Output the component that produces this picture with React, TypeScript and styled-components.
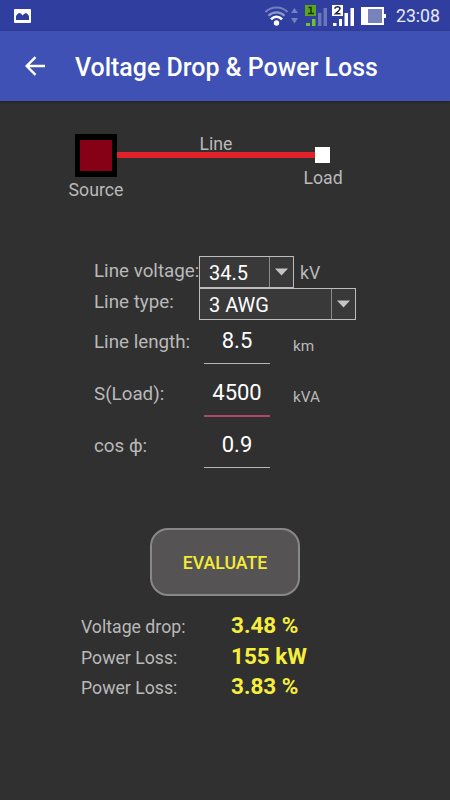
import React from "react";
import styled, { createGlobalStyle } from "styled-components";

const Global = createGlobalStyle`
  * { box-sizing: border-box; }
  body { margin: 0; background: #303030; }
`;

const Screen = styled.div`
  width: 450px;
  height: 800px;
  overflow: hidden;
  background: #303030;
  font-family: Roboto, "Liberation Sans", sans-serif;
  color: #b9b9b9;
`;

const StatusBar = styled.header`
  height: 31px;
  background: #303f9f;
  display: flex;
  align-items: flex-start;
  justify-content: space-between;
`;

const AppBar = styled.div`
  height: 70px;
  background: #3f51b5;
  display: flex;
  align-items: center;
  padding-left: 25px;
  box-shadow: 0 1px 2px #222;
`;

const Title = styled.h1`
  margin: 3px 0 0 30px;
  font-size: 24.95px;
  line-height: 32px;
  font-weight: 500;
  color: #fff;
  white-space: nowrap;
`;

const Text = styled.span<{ $size?: number; $top?: number; $left?: number; $color?: string }>`
  display: block;
  flex: none;
  white-space: nowrap;
  line-height: 24px;
  font-size: ${(p) => p.$size ?? 17.7}px;
  margin-top: ${(p) => p.$top ?? 0}px;
  margin-left: ${(p) => p.$left ?? 0}px;
  color: ${(p) => p.$color ?? "inherit"};
`;

const Diagram = styled.section`
  display: flex;
  height: 122px;
  padding: 33px 0 0 75px;
  margin-bottom: 33px;
`;

const Node = styled.div<{ $width: number; $top?: number }>`
  width: ${(p) => p.$width}px;
  padding-top: ${(p) => p.$top ?? 0}px;
  display: flex;
  flex-direction: column;
  align-items: center;
`;

const SourceBox = styled.div`
  flex: none;
  width: 42px;
  height: 43px;
  background: #860016;
  border: solid #000;
  border-width: 6px 5px;
`;

const LoadBox = styled.div`
  flex: none;
  width: 15px;
  height: 16px;
  background: #fff;
`;

const Wire = styled.div`
  width: 198px;
  display: flex;
  flex-direction: column;
  align-items: center;
`;

const WireLine = styled.div`
  width: 100%;
  height: 6px;
  margin-top: -4px;
  background: #e02228;
`;

const Form = styled.section`
  padding-left: 94px;
  height: 272px;
`;

const Row = styled.div<{ $height: number }>`
  display: grid;
  grid-template-columns: 105px 157px;
  height: ${(p) => p.$height}px;
`;

const Cell = styled.div`
  display: flex;
  align-items: flex-start;
`;

const Select = styled.div<{ $width: number }>`
  flex: none;
  width: ${(p) => p.$width}px;
  height: 32px;
  display: flex;
  background: #393939;
  border: 1.5px solid #bcbcbc;
`;

const SelectValue = styled.div`
  flex: 1;
  padding: 4px 0 0 9px;
`;

const SelectArrow = styled.div`
  width: 24px;
  border-left: 1px solid #8b8b8b;
  padding: 11px 0 0 5px;
  line-height: 0;
`;

const Field = styled.div<{ $color: string; $line: number; $height: number }>`
  flex: none;
  width: 66px;
  height: ${(p) => p.$height}px;
  margin-left: 5px;
  display: flex;
  justify-content: center;
  border-bottom: ${(p) => p.$line}px solid ${(p) => p.$color};
`;

const Evaluate = styled.button`
  display: block;
  width: 150px;
  height: 68px;
  margin: 0 0 19px 150px;
  padding: 1px 0 0;
  border: 2.5px solid #888;
  border-radius: 18px;
  background: #555354;
  color: #f3ec35;
  font: 500 17.7px/24px Roboto, "Liberation Sans", sans-serif;
`;

const ResultRow = styled.div`
  display: grid;
  grid-template-columns: 150px 1fr;
  height: 30.5px;
  padding-left: 81px;
`;

const ResultValue = styled.strong`
  font-size: 22.5px;
  line-height: 24px;
  font-weight: 700;
  color: #f6ee3e;
  margin-top: -2px;
  white-space: nowrap;
`;

const Arrow = () => (
  <svg width="13" height="8" viewBox="0 0 13 8">
    <path d="M0 .5h13L6.5 7.5z" fill="#c4c4c4" />
  </svg>
);

const PictureIcon = () => (
  <svg width="60" height="31" viewBox="0 0 60 31">
    <rect x="14" y="9" width="17" height="14" rx="1" fill="#fff" />
    <path d="M16 20v-4l1.500-2 1.500-1 2 .5 1.500 2 1.500-1.500 2-1 2 1.500 1 2v3.500z" fill="#303f9f" />
  </svg>
);

const StatusIcons = () => (
  <svg width="135" height="31" viewBox="255 0 135 31">
    <g fill="none" strokeWidth="2.2">
      <path d="M265.500 12c6-6 16-6 22 0" stroke="#7480bd" />
      <path d="M268.500 15.700c4.500-4.500 11.500-4.500 16 0" stroke="#8f98cb" />
      <path d="M271 19.400c3.200-3.600 7.800-3.600 11 0" stroke="#fff" strokeWidth="2.600" />
    </g>
    <circle cx="276.500" cy="23" r="2.700" fill="#fff" />
    <path d="M291 13h7l-3.500-5zM291 18h7l-3.500 5.500z" fill="#7480bd" />
    <rect x="305" y="5" width="11" height="11" fill="#5aa51b" />
    <path d="M308.500 7.500h2.500v6M308 13.500h6" fill="none" stroke="#18310c" strokeWidth="1.500" />
    <path d="M306 23h4v3h-4zM312 19h3.500v7H312z" fill="#70c12b" />
    <path d="M318 13h3.500v13H318zM323.500 8h3.500v18h-3.500z" fill="#6976b7" />
    <rect x="332" y="5" width="11" height="11" fill="#fff" />
    <path d="M335 8.800q0-2 2.500-2t2.500 1.800q0 1.500-4.500 5.200h5" fill="none" stroke="#202744" strokeWidth="1.500" />
    <path d="M333 23h3.500v3H333zM339 19h3v7h-3zM344.500 13h3.500v13h-3.500zM350.500 8h3.500v18h-3.500z" fill="#fff" />
    <path d="M361 7h23v7h2v4h-2v7h-23z" fill="#fff" />
    <rect x="368" y="9" width="14" height="14" fill="#7882bd" />
  </svg>
);

const StatusRight = styled.div`
  display: flex;
  padding-right: 10px;
`;

const BackIcon = () => (
  <svg width="20" height="20" viewBox="0 0 20 20" fill="none" stroke="#fff" strokeWidth="2.400">
    <path d="M20 10H2M10.500 1.200L1.700 10l8.800 8.800" />
  </svg>
);

const results = [
  ["Voltage drop:", "3.48 %"],
  ["Power Loss:", "155 kW"],
  ["Power Loss:", "3.83 %"],
];

const fields = [
  { label: "Line length:", value: "8.5", unit: "km", line: "#b5b5b5", stroke: 1.5, height: 44, shift: 0 },
  { label: "S(Load):", value: "4500", unit: "kVA", line: "#b04865", stroke: 2, height: 45, shift: 0 },
  { label: "cos ф:", value: "0.9", unit: "", line: "#b5b5b5", stroke: 1.5, height: 44.5, shift: 0.7 },
];

export default function App() {
  return (
    <Screen>
      <Global />
      <StatusBar>
        <PictureIcon />
        <StatusRight>
          <StatusIcons />
          <Text $top={4} $left={6} $color="#e8eaf6">23:08</Text>
        </StatusRight>
      </StatusBar>
      <AppBar>
        <BackIcon />
        <Title>Voltage Drop &amp; Power Loss</Title>
      </AppBar>
      <Diagram>
        <Node $width={42}>
          <SourceBox />
          <Text $top={1}>Source</Text>
        </Node>
        <Wire>
          <Text $top={-2}>Line</Text>
          <WireLine />
        </Wire>
        <Node $width={15} $top={13}>
          <LoadBox />
          <Text $top={3} $left={1}>Load</Text>
        </Node>
      </Diagram>
      <Form>
        <Row $height={32}>
          <Text $size={18.8} $top={2.5}>Line voltage:</Text>
          <Cell>
            <Select $width={95}>
              <SelectValue><Text $size={20} $color="#fff">34.5</Text></SelectValue>
              <SelectArrow><Arrow /></SelectArrow>
            </Select>
            <Text $top={5} $left={6}>kV</Text>
          </Cell>
        </Row>
        <Row $height={32}>
          <Text $size={18.8} $top={1.5}>Line type:</Text>
          <Select $width={157}>
            <SelectValue><Text $size={20} $color="#fff">3 AWG</Text></SelectValue>
            <SelectArrow><Arrow /></SelectArrow>
          </Select>
        </Row>
        {fields.map((f) => (
          <Row $height={51.7} key={f.label}>
            <Text $size={18.8} $top={10.3 + f.shift}>{f.label}</Text>
            <Cell>
              <Field $color={f.line} $line={f.stroke} $height={f.height}>
                <Text $size={22} $top={9.3 + f.shift} $color="#fff">{f.value}</Text>
              </Field>
              <Text $size={15.3} $top={13.5} $left={23}>{f.unit}</Text>
            </Cell>
          </Row>
        ))}
      </Form>
      <Evaluate>EVALUATE</Evaluate>
      {results.map(([label, value], i) => (
        <ResultRow key={i}>
          <Text>{label}</Text>
          <ResultValue>{value}</ResultValue>
        </ResultRow>
      ))}
    </Screen>
  );
}
